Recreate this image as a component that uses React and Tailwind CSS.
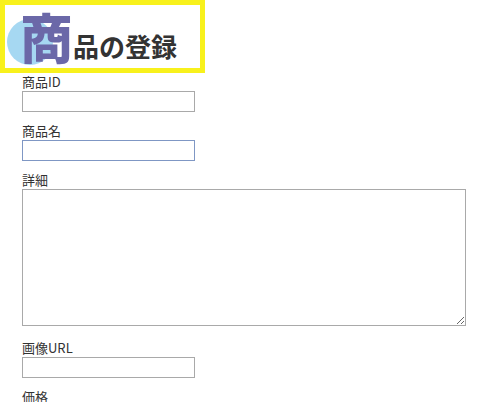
export default function App() {
  const font = { fontFamily: '"Noto Sans CJK JP", "Noto Sans", sans-serif' };
  return (
    <div className="bg-white w-[497px] h-[402px] overflow-hidden text-[#333]" style={font}>
      <div className="relative w-[205px] h-[73px] border-[5px] border-[#f8f11c] flex items-end pl-[15px] pb-[5px]">
        <div className="absolute left-[2px] top-[14px] w-[46px] h-[46px] rounded-full bg-[#a6d8f2]" />
        <span className="relative text-[53px] leading-[53px] font-black text-[#6b68a8]">商</span>
        <span className="relative text-[26px] leading-[26px] font-bold text-[#333] mb-[4px]">品の登録</span>
      </div>
      <div className="pl-[22px] flex flex-col">
        <label className="block text-[13px] leading-[18px] h-[18px]">商品ID</label>
        <input className="block w-[173px] h-[21px] border border-[#a9a9a9] outline-none" />
        <label className="block text-[13px] leading-[18px] h-[18px] mt-[10px]">商品名</label>
        <input className="block w-[173px] h-[21px] border border-[#7f97c4] outline-none" />
        <label className="block text-[13px] leading-[18px] h-[18px] mt-[10px]">詳細</label>
        <textarea className="block w-[444px] h-[137px] border border-[#a9a9a9] outline-none" />
        <label className="block text-[13px] leading-[18px] h-[18px] mt-[13px]">画像URL</label>
        <input className="block w-[173px] h-[21px] border border-[#a9a9a9] outline-none" />
        <label className="block text-[13px] leading-[18px] h-[18px] mt-[10px]">価格</label>
      </div>
    </div>
  );
}
